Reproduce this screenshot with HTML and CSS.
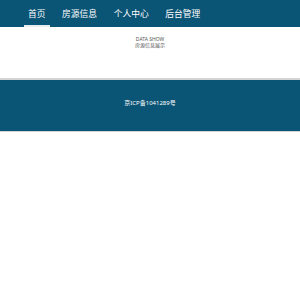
FILE: index.html
```html
<!DOCTYPE html>
<html lang="zh-CN">
<head>
    <meta charset="UTF-8">
    <meta name="viewport" content="width=device-width, initial-scale=1">
    <title>首页</title>
    <link rel="stylesheet" href="styles.css">
</head>
<body>
    <div class="navbar">
        <ul class="nav">
            <li class="active"><a href="#">首页</a></li>
            <li><a href="#">房源信息</a></li>
            <li><a href="#">个人中心</a></li>
            <li><a href="#">后台管理</a></li>
        </ul>
    </div>

    <div class="banner">
        <p class="en">DATA SHOW</p>
        <p class="cn">房源信息展示</p>
    </div>

    <div class="footer">
        <p>京ICP备1041289号</p>
    </div>
</body>
</html>
```

FILE: styles.css
```css
body {
    margin: 0;
    padding: 0;
    font-family: "Noto Sans", "Noto Sans CJK SC", sans-serif;
    background: #fff;
}

.navbar {
    background: #0a5475;
    height: 27px;
}

.nav {
    list-style: none;
    margin: 0;
    padding: 0 0 0 24px;
    display: flex;
    height: 100%;
}

.nav li {
    padding: 0 4px;
    margin-right: 8.6px;
    display: flex;
    align-items: center;
    box-sizing: border-box;
    height: 100%;
}

.nav li.active {
    border-bottom: 2px solid #e6eef2;
    padding-top: 2px;
}

.nav a {
    color: #fff;
    text-decoration: none;
    font-size: 8.75px;
}

.banner {
    height: 51px;
    text-align: center;
    padding-top: 9px;
    box-sizing: border-box;
}

.banner p {
    margin: 0;
    font-size: 5px;
    line-height: 6px;
    color: #555;
}

.footer {
    background: #0a5475;
    border-top: 2px solid #d4d4d4;
    border-bottom: 1px solid #d4d4d4;
    height: 54px;
    box-sizing: border-box;
    padding-top: 19px;
    text-align: center;
}

.footer p {
    margin: 0;
    color: #fff;
    font-size: 6px;
    line-height: 8px;
}
```
